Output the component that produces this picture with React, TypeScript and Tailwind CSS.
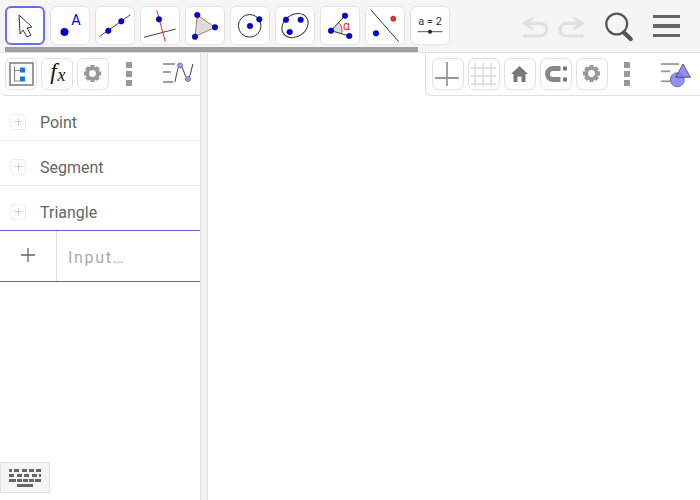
import React from "react";

const Dot = ({ x, y, r = 2.8, fill = "#0000e0" }: { x: number; y: number; r?: number; fill?: string }) => (
  <circle cx={x} cy={y} r={r} fill={fill} stroke="#000060" strokeWidth={0.5} />
);

const ToolBtn = ({ selected, children }: { selected?: boolean; children: React.ReactNode }) => (
  <div
    className={
      selected
        ? "w-[40px] h-[39px] shrink-0 rounded-[6px] bg-white border-[2px] border-[#6a6cff] box-border overflow-hidden"
        : "w-[40px] h-[39px] shrink-0 rounded-[6px] bg-white border border-[#e4e4e4] box-border overflow-hidden"
    }
  >
    <svg width="39" height="39" viewBox="0 0 39 39" className={selected ? "-ml-px -mt-[2px] block" : "-mt-px block"}>
      {children}
    </svg>
  </div>
);

const Gear = ({ color = "#999" }: { color?: string }) => (
  <svg width="31" height="31" viewBox="0 0 31 31" className="block">
    <circle cx="15.5" cy="15.5" r="5.2" fill="none" stroke={color} strokeWidth="3.6" />
    {[0, 45, 90, 135, 180, 225, 270, 315].map((a) => (
      <rect key={a} x="13.4" y="7" width="4.2" height="4" fill={color} transform={`rotate(${a} 15.5 15.5)`} />
    ))}
  </svg>
);

const StyleBtn = ({ children }: { children: React.ReactNode }) => (
  <div className="w-[32px] h-[32px] shrink-0 rounded-[6px] bg-white border border-[#e2e2e2] box-border overflow-hidden">
    <div className="-m-px">{children}</div>
  </div>
);

const Kebab = () => (
  <div className="flex flex-col gap-[3px] w-[6px] shrink-0">
    <div className="w-[6px] h-[6px] bg-[#999]" />
    <div className="w-[6px] h-[6px] bg-[#999]" />
    <div className="w-[6px] h-[6px] bg-[#999]" />
  </div>
);

const Row = ({ label, last }: { label: string; last?: boolean }) => (
  <div
    className={
      last
        ? "h-[44px] flex items-center pl-[10px] pt-[7px] box-border"
        : "h-[45px] flex items-center pl-[10px] pt-[7px] border-b border-[#ececec] box-border"
    }
  >
    <div className="w-[16px] h-[16px] rounded-[3px] border border-[#eeeeee] box-border flex items-center justify-center relative">
      <div className="w-[8px] h-px bg-[#cfcfcf]" />
      <div className="w-px h-[8px] bg-[#cfcfcf] absolute" />
    </div>
    <span className="ml-[14px] pt-[2px] text-[16px] leading-[24px] text-[#666666]">{label}</span>
  </div>
);

export default function App() {
  return (
    <div
      className="w-[700px] h-[500px] relative overflow-hidden bg-white flex flex-col"
      style={{ fontFamily: "Roboto, 'Liberation Sans', sans-serif" }}
    >
      {/* Top toolbar */}
      <div className="h-[53px] shrink-0 bg-[#f5f5f5] border-b border-[#e0e0e0] box-border flex items-start pt-[6px] pl-[5px] relative">
        <div className="flex gap-[5px]">
          <ToolBtn selected>
            <path d="M13 9 L26 21 L21 22 L25 29 L21 31 L17 24 L14 28 Z" fill="#fff" stroke="#333" strokeWidth="1" strokeLinejoin="round" />
          </ToolBtn>
          <ToolBtn>
            <circle cx="13.5" cy="26" r="3.8" fill="#0000d0" stroke="#000060" strokeWidth="0.5" />
            <text x="25" y="19" textAnchor="middle" fontSize="14.5" fill="#0000ff" fontFamily="Roboto, sans-serif">A</text>
          </ToolBtn>
          <ToolBtn>
            <line x1="3.5" y1="30.5" x2="34.5" y2="8.7" stroke="#444" strokeWidth="1" />
            <Dot x={12.3} y={24.7} />
            <Dot x={25.3} y={15.3} />
          </ToolBtn>
          <ToolBtn>
            <line x1="3" y1="31.3" x2="34.7" y2="23" stroke="#444" strokeWidth="1" />
            <line x1="15.7" y1="4" x2="24.3" y2="35.7" stroke="#f03030" strokeWidth="1" />
            <Dot x={18} y={13.3} />
          </ToolBtn>
          <ToolBtn>
            <polygon points="11.3,9 29,21.3 9,30.7" fill="#dcdcdc" stroke="#c4705c" strokeWidth="1" />
            <Dot x={11.3} y={9} />
            <Dot x={29} y={21.3} />
            <Dot x={9} y={30.7} />
          </ToolBtn>
          <ToolBtn>
            <circle cx="18.7" cy="19.8" r="11.3" fill="none" stroke="#333" strokeWidth="1" />
            <Dot x={19} y={20} />
            <Dot x={28.3} y={13.3} />
          </ToolBtn>
          <ToolBtn>
            <ellipse cx="19" cy="19.6" rx="14" ry="11" fill="none" stroke="#333" strokeWidth="1" transform="rotate(-35 19 19.6)" />
            <Dot x={10} y={13.7} />
            <Dot x={24.7} y={13.7} />
            <Dot x={13.7} y={26} />
          </ToolBtn>
          <ToolBtn>
            <path d="M10 24.7 L17.5 16.5 A11 11 0 0 1 20.5 27.7 Z" fill="#dcdcdc" stroke="none" />
            <path d="M17.5 16.5 A11 11 0 0 1 20.5 27.7" fill="none" stroke="#f03030" strokeWidth="1" />
            <line x1="10" y1="24.7" x2="24" y2="9.7" stroke="#333" strokeWidth="1" />
            <line x1="10" y1="24.7" x2="28.3" y2="30" stroke="#333" strokeWidth="1" />
            <text x="25.5" y="24" textAnchor="middle" fontSize="12" fill="#f03030" fontFamily="Roboto, sans-serif">α</text>
            <Dot x={10} y={24.7} />
            <Dot x={24} y={9.7} />
            <Dot x={28.3} y={30} />
          </ToolBtn>
          <ToolBtn>
            <line x1="5" y1="4" x2="32.7" y2="35.7" stroke="#333" strokeWidth="1" />
            <Dot x={10} y={27.3} />
            <circle cx="27.3" cy="12.7" r="2.6" fill="#f03030" stroke="#602020" strokeWidth="0.5" />
          </ToolBtn>
          <ToolBtn>
            <text x="19" y="19" textAnchor="middle" fontSize="11" fill="#333" fontFamily="Roboto, sans-serif">a = 2</text>
            <line x1="6.7" y1="25.7" x2="31.7" y2="25.7" stroke="#555" strokeWidth="1" />
            <circle cx="19" cy="25.7" r="2" fill="#222" />
          </ToolBtn>
        </div>

        <div className="ml-auto flex items-center h-[40px] pr-[20px]">
          {/* Undo / redo */}
          <svg width="66" height="30" viewBox="0 0 66 30" className="block mr-[15px]">
            <g fill="none" stroke="#e0e0e0" strokeWidth="3.2">
              <path d="M8 12.3 H19.3 A6.35 6.35 0 0 1 19.3 25 H2" />
              <path d="M56.6 12.3 H45.3 A6.35 6.35 0 0 0 45.3 25 H62.6" />
            </g>
            <path d="M0.7 12.3 L12.3 5 V8 L7.5 12.3 L12.3 16.6 V19.7 Z" fill="#e0e0e0" />
            <path d="M63.9 12.3 L52.3 5 V8 L57.1 12.3 L52.3 16.6 V19.7 Z" fill="#e0e0e0" />
          </svg>
          {/* Search */}
          <svg width="34" height="34" viewBox="0 0 34 34" className="block mr-[17px]">
            <circle cx="14.7" cy="15" r="10.4" fill="none" stroke="#555" strokeWidth="2.2" />
            <line x1="22" y1="23.5" x2="28.7" y2="30" stroke="#555" strokeWidth="4.4" strokeLinecap="round" />
          </svg>
          {/* Menu */}
          <div className="flex flex-col gap-[6.3px] w-[27px]">
            <div className="h-[3.3px] bg-[#666]" />
            <div className="h-[3.3px] bg-[#666]" />
            <div className="h-[3.3px] bg-[#666]" />
          </div>
        </div>

        <div className="absolute left-[5px] top-[47px] w-[413px] h-[5px] bg-[#a0a0a0]" />
      </div>

      {/* Main */}
      <div className="flex-1 flex min-h-0">
        {/* Algebra view */}
        <div className="w-[200px] shrink-0 flex flex-col">
          <div className="h-[43px] shrink-0 flex items-center pl-[5px] border-b border-[#e0e0e0] rounded-bl-[6px] box-border">
            <div className="flex gap-[4px]">
              <StyleBtn>
                <svg width="32" height="32" viewBox="0 0 32 32" className="block">
                  <rect x="5" y="5" width="23" height="22" fill="none" stroke="#999" strokeWidth="2" />
                  <path d="M9.5 8.5 V23 H15 M9.5 12.5 H15" fill="none" stroke="#888" strokeWidth="1.2" />
                  <rect x="15" y="9.5" width="5" height="5" fill="#1976e0" />
                  <rect x="15" y="18.5" width="5" height="5" fill="#1976e0" />
                </svg>
              </StyleBtn>
              <StyleBtn>
                <svg width="32" height="32" viewBox="0 0 32 32" className="block">
                  <text x="12.5" y="21" textAnchor="middle" fontSize="23" fontStyle="italic" fontFamily="'Liberation Serif', serif" fill="#111">f</text>
                  <text x="20.5" y="23" textAnchor="middle" fontSize="18" fontStyle="italic" fontFamily="'Liberation Serif', serif" fill="#111">x</text>
                </svg>
              </StyleBtn>
              <StyleBtn><Gear /></StyleBtn>
            </div>
            <div className="ml-[17px]"><Kebab /></div>
            <svg width="32" height="24" viewBox="0 0 32 24" className="block ml-[31px]">
              <g stroke="#888" strokeWidth="1.6" fill="none">
                <line x1="0" y1="2" x2="12" y2="2" />
                <line x1="0" y1="10" x2="8" y2="10" />
                <line x1="0" y1="20" x2="10" y2="20" />
              </g>
              <path d="M12 20 C14 10 15 3 17 3 C20 3 22 17 25 17 C27 17 28 8 30 2" fill="none" stroke="#555" strokeWidth="1.1" />
              <circle cx="17" cy="3.5" r="2.6" fill="#9999ff" stroke="#444" strokeWidth="0.5" />
              <circle cx="25" cy="17" r="2.6" fill="#9999ff" stroke="#444" strokeWidth="0.5" />
            </svg>
          </div>
          <Row label="Point" />
          <Row label="Segment" />
          <Row label="Triangle" last />
          <div className="h-[52px] shrink-0 flex border-y border-[#6557d2] box-border">
            <div className="w-[56px] flex items-center justify-center border-r border-[#e0e0e0] box-content">
              <svg width="16" height="16" viewBox="0 0 16 16" className="block -mt-[2px]">
                <path d="M1 8 H15 M8 1 V15" stroke="#666" strokeWidth="1.3" fill="none" />
              </svg>
            </div>
            <div className="pl-[11px] pt-[4px] flex items-center text-[16px] tracking-[1.7px] text-[#aaaaaa]">Input…</div>
          </div>
        </div>

        {/* Splitter */}
        <div className="w-[8px] shrink-0 bg-[#f3f3f3] border-l border-[#e0e0e0] border-r box-border" />

        {/* Graphics view */}
        <div className="flex-1 bg-white relative">
          <div className="absolute right-0 top-0 w-[275px] h-[43px] bg-white border-l border-b border-[#e0e0e0] rounded-bl-[6px] box-border flex items-center pl-[6px]">
            <div className="flex gap-[4px]">
              <StyleBtn>
                <svg width="32" height="32" viewBox="0 0 32 32" className="block">
                  <path d="M3 20 H27 M15 4 V28" stroke="#999" strokeWidth="1.8" fill="none" />
                </svg>
              </StyleBtn>
              <StyleBtn>
                <svg width="32" height="32" viewBox="0 0 32 32" className="block">
                  <path d="M7 5 V29 M15 5 V29 M23 5 V29 M3 10 H28 M3 18 H28 M3 26 H28" stroke="#e0e0e0" strokeWidth="1.8" fill="none" />
                </svg>
              </StyleBtn>
              <StyleBtn>
                <svg width="32" height="32" viewBox="0 0 32 32" className="block">
                  <path d="M15.5 8 L24 16 H21.5 V24 H17.5 V18.5 H13.5 V24 H9.5 V16 H7 Z" fill="#777" />
                </svg>
              </StyleBtn>
              <StyleBtn>
                <svg width="32" height="32" viewBox="0 0 32 32" className="block">
                  <path d="M20.5 10.5 H13 A5.5 5.5 0 0 0 13 21.5 H20.5" fill="none" stroke="#888" strokeWidth="5" />
                  <rect x="23" y="8.5" width="4" height="4" fill="#777" />
                  <rect x="23" y="19.5" width="4" height="4" fill="#777" />
                </svg>
              </StyleBtn>
              <StyleBtn><Gear /></StyleBtn>
            </div>
            <div className="ml-[16px]"><Kebab /></div>
            <svg width="34" height="28" viewBox="0 0 34 28" className="block ml-[31px]">
              <g stroke="#999" strokeWidth="1.8" fill="none">
                <line x1="0" y1="4" x2="18" y2="4" />
                <line x1="0" y1="11.3" x2="9" y2="11.3" />
                <line x1="0" y1="21.3" x2="10" y2="21.3" />
              </g>
              <circle cx="16.3" cy="19.7" r="7" fill="#9090ff" stroke="#666" strokeWidth="0.8" />
              <polygon points="22,4 29.5,17.3 14.7,17.3" fill="#7d7df0" fillOpacity="0.85" stroke="#444" strokeWidth="0.8" />
            </svg>
          </div>
        </div>
      </div>

      {/* Keyboard button */}
      <div className="absolute left-0 top-[462px] w-[50px] h-[31px] bg-[#f5f5f5] border border-[#e0e0e0] box-border flex flex-col items-center justify-center gap-[2px]">
        {[
          [3, 5, 5, 5, 5],
          [5, 5, 5, 5, 2],
          [7, 5, 5, 5, 6],
        ].map((keys, i) => (
          <div key={i} className="flex justify-between w-[32px]">
            {keys.map((w, j) => (
              <div key={j} className="h-[3px] bg-[#666]" style={{ width: w }} />
            ))}
          </div>
        ))}
        <div className="w-[16px] h-[3px] bg-[#666]" />
      </div>
    </div>
  );
}
